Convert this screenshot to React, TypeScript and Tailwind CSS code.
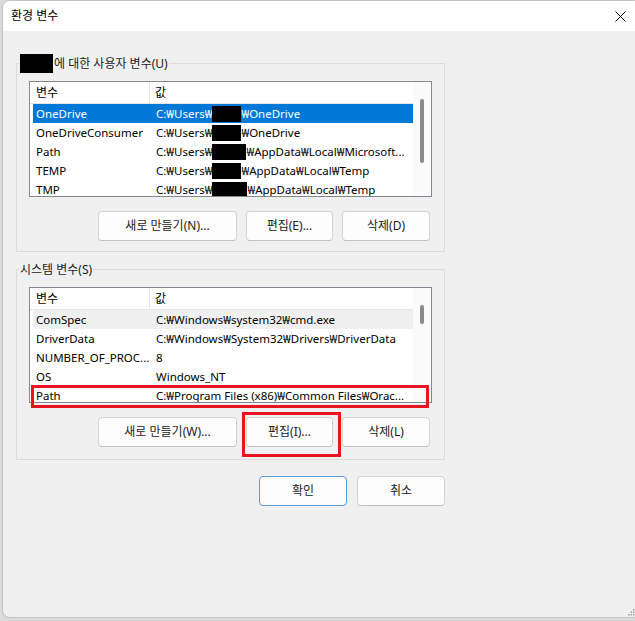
import React from 'react';

const font = "font-['Noto_Sans','Noto_Sans_CJK_KR',sans-serif]";

function Redact({ w }: { w: number }) {
  return <span className="inline-block h-[16px] bg-black align-middle" style={{ width: w }} />;
}

type Row = { name: string; value: React.ReactNode; state?: 'selected' | 'hover' };

function VarList({ rows, thumbTop, thumbHeight, children }: { rows: Row[]; thumbTop: number; thumbHeight: number; children?: React.ReactNode }) {
  return (
    <div className="relative flex h-[116px] w-[403px] border border-[#828790] bg-white text-[12px] text-black">
      <div className="flex-1 overflow-hidden">
        <div className="flex h-[22px] items-center border-b border-[#e5e5e5]">
          <div className="flex h-full w-[120px] items-center border-r border-[#e5e5e5] pl-[6px]">변수</div>
          <div className="pl-[5px]">값</div>
        </div>
        {rows.map((r) => (
          <div
            key={r.name}
            className={
              'ml-[3px] flex h-[19px] items-center whitespace-nowrap text-[11.5px] ' +
              (r.state === 'selected' ? 'bg-[#0078d7] text-white' : r.state === 'hover' ? 'bg-[#f0f0f0]' : '')
            }
          >
            <div className="w-[117px] pl-[3px]">{r.name}</div>
            <div className="pl-[6px]">{r.value}</div>
          </div>
        ))}
      </div>
      <div className="flex w-[18px] justify-center bg-[#fbfbfb]">
        <div className="w-[4px] rounded-full bg-[#8a8a8a]" style={{ marginTop: thumbTop, height: thumbHeight }} />
      </div>
      {children}
    </div>
  );
}

function Btn({ label, w, focus, children }: { label: string; w: number; focus?: boolean; children?: React.ReactNode }) {
  return (
    <div
      className={
        'relative flex h-[30px] items-center justify-center rounded-[4px] border bg-[#fdfdfd] text-[12px] text-[#1b1b1b] ' +
        (focus ? 'border-[#5d9bd9]' : 'border-[#d4d4d4] border-b-[#c2c2c2]')
      }
      style={{ width: w }}
    >
      {label}
      {children}
    </div>
  );
}

export default function App() {
  const userRows: Row[] = [
    { name: 'OneDrive', value: <>C:₩Users₩<Redact w={29} />₩OneDrive</>, state: 'selected' },
    { name: 'OneDriveConsumer', value: <>C:₩Users₩<Redact w={29} />₩OneDrive</> },
    { name: 'Path', value: <>C:₩Users₩<Redact w={34} />₩AppData₩Local₩Microsoft...</> },
    { name: 'TEMP', value: <>C:₩Users₩<Redact w={29} />₩AppData₩Local₩Temp</> },
    { name: 'TMP', value: <>C:₩Users₩<Redact w={35} />₩AppData₩Local₩Temp</> },
  ];
  const sysRows: Row[] = [
    { name: 'ComSpec', value: 'C:₩Windows₩system32₩cmd.exe', state: 'hover' },
    { name: 'DriverData', value: 'C:₩Windows₩System32₩Drivers₩DriverData' },
    { name: 'NUMBER_OF_PROC...', value: '8' },
    { name: 'OS', value: 'Windows_NT' },
    { name: 'Path', value: 'C:₩Program Files (x86)₩Common Files₩Orac...' },
  ];

  return (
    <div className={`h-[621px] w-[635px] overflow-hidden bg-[#dadada] pl-[2px] ${font}`}>
      <div className="flex h-[618px] w-[640px] flex-col overflow-hidden rounded-[8px] border border-[#c4c4c4] bg-[#f0f0f0]">
        {/* Title bar */}
        <div className="flex h-[30px] items-center justify-between bg-white pl-[8px] pr-[13px] text-[12px] text-black">
          <span>환경 변수</span>
          <svg width="11" height="11" viewBox="0 0 11 11" className="mr-[2px]">
            <path d="M0.5 0.5 L10.5 10.5 M10.5 0.5 L0.5 10.5" stroke="#000" strokeWidth="1" />
          </svg>
        </div>

        <div className="flex flex-1 flex-col pl-[13px] pt-[23px]">
          {/* User variables */}
          <fieldset className="w-[429px] border border-[#dcdcdc] pb-[10px] pl-[12px] pt-[8px]">
            <legend className="ml-[-10px] flex h-[19px] items-center px-[1px] text-[12px] text-[#1b1b1b]">
              <span className="mr-[1px] inline-block h-[19px] w-[33px] bg-black" />에 대한 사용자 변수(U)
            </legend>
            <VarList rows={userRows} thumbTop={17} thumbHeight={64} />
            <div className="mt-[14px] flex w-[401px] justify-end gap-[9px]">
              <Btn label="새로 만들기(N)..." w={139} />
              <Btn label="편집(E)..." w={87} />
              <Btn label="삭제(D)" w={88} />
            </div>
          </fieldset>

          {/* System variables */}
          <fieldset className="mt-[8px] w-[429px] border border-[#dcdcdc] pb-[12px] pl-[12px] pt-[8px]">
            <legend className="ml-[-10px] flex h-[19px] items-center px-[1px] text-[12px] text-[#1b1b1b]">
              시스템 변수(S)
            </legend>
            <VarList rows={sysRows} thumbTop={17} thumbHeight={19}>
              <div className="pointer-events-none absolute left-[1px] top-[97px] h-[23px] w-[398px] border-[3px] border-[#e8141e]" />
            </VarList>
            <div className="mt-[14px] flex w-[401px] justify-end gap-[9px]">
              <Btn label="새로 만들기(W)..." w={139} />
              <Btn label="편집(I)..." w={87}>
                <div className="pointer-events-none absolute left-[-5px] top-[-6px] h-[45px] w-[99px] border-[3px] border-[#e8141e]" />
              </Btn>
              <Btn label="삭제(L)" w={88} />
            </div>
          </fieldset>

          {/* OK / Cancel */}
          <div className="mt-[16px] flex w-[429px] justify-end gap-[10px]">
            <Btn label="확인" w={88} focus />
            <Btn label="취소" w={88} />
          </div>

          {/* Resize grip */}
          <div className="mt-auto flex w-[619px] justify-end pb-[1px]">
            <svg width="7" height="7" viewBox="0 0 7 7">
              <rect x="5" y="0" width="1.5" height="1.5" fill="#a0a0a0" />
              <rect x="2.5" y="2.5" width="1.5" height="1.5" fill="#a0a0a0" />
              <rect x="5" y="2.5" width="1.5" height="1.5" fill="#a0a0a0" />
              <rect x="0" y="5" width="1.5" height="1.5" fill="#a0a0a0" />
              <rect x="2.5" y="5" width="1.5" height="1.5" fill="#a0a0a0" />
              <rect x="5" y="5" width="1.5" height="1.5" fill="#a0a0a0" />
            </svg>
          </div>
        </div>
      </div>
    </div>
  );
}
